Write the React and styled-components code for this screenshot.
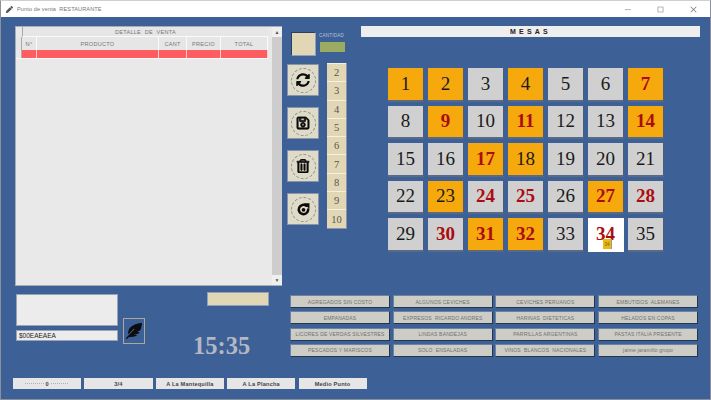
import React from "react";
import styled, { createGlobalStyle } from "styled-components";
import { FaSyncAlt, FaRegSave, FaRegTrashAlt, FaFeatherAlt, FaPen } from "react-icons/fa";
import { VscChromeMinimize, VscChromeMaximize, VscChromeClose } from "react-icons/vsc";

const Global = createGlobalStyle`
  html, body { margin: 0; padding: 0; width: 711px; height: 400px; overflow: hidden; }
  * { box-sizing: border-box; }
`;

const Win = styled.div`
  width: 711px; height: 400px; display: flex; flex-direction: column;
  background: #3d6097; border: 1px solid #8a8f98; border-top-color: #cfcfcf;
  font-family: "Liberation Sans", Arial, sans-serif; overflow: hidden;
`;
const TitleBar = styled.div`
  height: 16px; flex: none; background: #fff; display: flex; align-items: center; padding-left: 5px;
  color: #777; font-size: 5.6px; letter-spacing: 0.1px;
`;
const TitleIcon = styled.span`display: flex; color: #555; font-size: 7px; margin-right: 4px;`;
const TitleText = styled.span`flex: 1; white-space: pre;`;
const WinBtn = styled.span`width: 33px; display: flex; justify-content: center; color: #777; font-size: 9px;`;

const Top = styled.div`height: 260px; flex: none; margin-top: 9px; display: flex;`;
const TablePanel = styled.div`
  width: 267px; margin-left: 14px; background: #e9e9e9; display: flex; border: 1px solid #a9adb5; border-right: none;
`;
const TableArea = styled.div`flex: 1; display: flex; flex-direction: column; border-right: 3px solid #e9e9e9;`;
const Scrollbar = styled.div`width: 11px; background: #cdcdcd; display: flex; flex-direction: column; margin-left: 1px;`;
const ScrollBtn = styled.div`height: 10px; background: #efefef; color: #555; font-size: 5px; display: flex; align-items: center; justify-content: center;`;
const ScrollTrack = styled.div`flex: 1;`;
const HeadTop = styled.div`
  height: 10px; margin-left: 6px; background: #e6e6e6; border-bottom: 1px solid #fafafa; border-left: 1px solid #aaa;
  color: #777; font-size: 5.5px; letter-spacing: 0.3px; display: flex; align-items: center; justify-content: center; white-space: pre;
`;
const Row = styled.div`height: ${p => p.$h}px; display: flex; flex: none;`;
const Gutter = styled.div`width: 6px; background: ${p => p.$bg || "#e6e6e6"}; border-right: 1px solid #aaa;`;
const HeadCell = styled.div`
  width: ${p => p.$w}px; background: #e6e6e6; border-right: 1px solid #fafafa; color: #777;
  font-size: 5.6px; letter-spacing: 0.25px; display: flex; align-items: center; justify-content: center;
`;
const RedCell = styled.div`width: ${p => p.$w}px; background: #fd5c60; border-right: 1px solid #fbd0d0;`;
const RedRow = styled(Row)`border-bottom: 1px solid #fafafa;`;

const Mid = styled.div`width: 60px; margin-left: 5px; position: relative; display: flex; padding-top: 6px;`;
const ToolCol = styled.div`width: 34px; display: flex; flex-direction: column; gap: 11px; align-items: flex-start;`;
const Swatch = styled.div`
  width: 25px; height: 24px; margin-left: 4px; margin-bottom: -3px; background: #e2d7b4;
  border: 1px solid #2e3f5e; border-right-color: #8da0bd; border-bottom-color: #8da0bd;
`;
const ToolBtn = styled.div`
  width: 32px; height: 32px; background: #dedbc8; border: 1px solid #8a93a8; display: flex; align-items: center; justify-content: center;
`;
const Ring = styled.div`
  width: 25px; height: 25px; border-radius: 50%; border: 1px dashed #8f8f8f; display: flex; align-items: center; justify-content: center;
  color: #0c0c0c; font-size: 14px;
  svg { stroke: currentColor; stroke-width: ${p => p.$bold || 0}; }
`;
const RightStack = styled.div`width: 30px; display: flex; flex-direction: column; align-items: flex-start;`;
const Qty = styled.div`color: #b8c4d8; font-size: 4.6px; letter-spacing: 0.2px; height: 7px; width: 30px; line-height: 7px; white-space: nowrap;`;
const GreenBox = styled.div`width: 25px; height: 10px; background: #9bab62; margin: 3px 0 11px 1px;`;
const NumList = styled.div`width: 20px; margin-left: 8px; display: flex; flex-direction: column; border-bottom: 1px solid #8a93a8; border-right: 1px solid #8a93a8;`;
const NumItem = styled.div`
  height: 18.3px; background: #e2d7b4; border-top: 1px solid #f4f0e2; color: #555; font: 10.5px "Liberation Serif", serif;
  display: flex; align-items: center; justify-content: center;
`;

const Right = styled.div`flex: 1; margin-left: 14px; display: flex; flex-direction: column;`;
const MesasBar = styled.div`
  width: 339px; height: 11px; background: #eeeeee; color: #222; font-size: 7px; font-weight: 700; letter-spacing: 3.2px;
  display: flex; align-items: center; justify-content: center; flex: none;
`;
const TileGrid = styled.div`
  margin: 31px 0 0 27px; width: 276px; display: grid; grid-template-columns: repeat(7, 36px); grid-auto-rows: 33.5px; gap: 4px;
`;
const TILE = { o: "#f5a90c", g: "#d0d0d0", w: "#ffffff" };
const Tile = styled.div`
  position: relative; background: ${p => TILE[p.$k]}; color: ${p => (p.$red ? "#ab0c10" : "#1a1a1a")};
  font: ${p => (p.$red ? 700 : 400)} 19px "Liberation Serif", serif;
  display: flex; align-items: center; justify-content: center;
  border-right: 1px solid ${p => (p.$k === "w" ? "#fff" : "#4d5c78")};
  border-bottom: 2px solid ${p => (p.$k === "w" ? "#fff" : "#5b6a84")};
`;
const DragTag = styled.div`
  position: absolute; left: 15px; top: 21px; width: 9px; height: 10px; background: #eeb90f; color: #6d5a20;
  border-right: 1px solid #999; font: 4.5px "Liberation Sans", sans-serif; display: flex; align-items: center; justify-content: center;
`;

const Bottom = styled.div`height: 75px; flex: none; display: flex; margin-top: 6px;`;
const LeftBottom = styled.div`width: 289px; display: grid; grid-template-columns: 107px 84px 1fr; padding-left: 15px;`;
const InputStack = styled.div`display: flex; flex-direction: column; padding-top: 2px;`;
const WhiteBox = styled.div`width: 102px; height: 32px; background: #ececec; border: 1px solid #9aa3b5;`;
const ColorField = styled.div`
  width: 102px; height: 11px; margin-top: 4px; background: #ececec; border: 1px solid #9aa3b5; color: #222; font-size: 6.5px;
  display: flex; align-items: center; padding-left: 2px;
`;
const FeatherCol = styled.div`padding-top: 26px;`;
const FeatherBtn = styled.div`
  width: 22px; height: 26px; border: 1px solid #a8a89c; color: #0d0d0d; font-size: 16px;
  display: flex; align-items: center; justify-content: center;
`;
const ClockCol = styled.div`display: flex; flex-direction: column;`;
const TanBar = styled.div`width: 62px; height: 14px; background: #e2d7b4; border: 1px solid #8da0bd;`;
const Clock = styled.div`
  margin: 26px 0 0 -14px; color: #b4b8c2; font: 700 24.5px "Liberation Serif", serif; line-height: 27px;
`;
const Categories = styled.div`
  width: 409px; display: grid; grid-template-columns: repeat(4, 100px); grid-auto-rows: 13px; column-gap: 2.7px; row-gap: 3.3px; padding-top: 3px;
`;
const CatBtn = styled.div`
  background: #cdcdc6; color: #70726e; font-size: 5px; letter-spacing: 0.18px; white-space: pre;
  border: 1px solid #24364f; border-left-color: #6d82a2; border-top-color: #6d82a2;
  display: flex; align-items: center; justify-content: center; overflow: hidden;
`;
const Footer = styled.div`display: flex; gap: 3.2px; padding: 11px 0 0 12px;`;
const FootBtn = styled.div`
  position: relative; width: 68.2px; height: 11px; background: #e6e6e6; color: #444; font-size: 5.6px; letter-spacing: 0.2px; font-weight: 700;
  display: flex; align-items: center; justify-content: center;
`;
const SliderBtn = styled(FootBtn)`
  &::before {
    content: ""; position: absolute; left: 12px; right: 13px; top: 5px; border-top: 1px dotted #b0b0b0;
  }
`;
const SliderValue = styled.span`position: relative; background: #e6e6e6; padding: 0 1px;`;

const RedoGlyph = () => (
  <svg width="15" height="15" viewBox="0 0 24 24" fill="none">
    <path d="M19.5 12a7.5 7.5 0 1 1-3-6" stroke="#0c0c0c" strokeWidth="4" strokeLinecap="round" />
    <path d="M12.5 2h9v9z" fill="#0c0c0c" stroke="none" />
    <circle cx="12" cy="12.5" r="3" fill="#0c0c0c" stroke="none" />
  </svg>
);

const tiles = [
  "o","o","g","o","g","g","or",
  "g","or","g","or","g","g","or",
  "g","g","or","o","g","g","g",
  "g","o","gr","gr","g","or","gr",
  "g","gr","or","or","g","wr","g",
];
const cats = [
  "AGREGADOS SIN COSTO","ALGUNOS CEVICHES","CEVICHES PERUANOS","EMBUTIDOS  ALEMANES",
  "EMPANADAS","EXPRESOS  RICARDO ANDRES","HARINAS  DIETETICAS","HELADOS EN COPAS",
  "LICORES DE VERDAS SILVESTRES","LINDAS BANDEJAS","PARRILLAS ARGENTINAS","PASTAS ITALIA PRESENTE",
  "PESCADOS Y MARISCOS","SOLO  ENSALADAS","VINOS  BLANCOS  NACIONALES","jaime jaramillo grupo",
];
const cols = [["N°",15],["PRODUCTO",122],["CANT",28],["PRECIO",34],["TOTAL",47]];

export default function App() {
  return (
    <Win>
      <Global />
      <TitleBar>
        <TitleIcon><FaPen /></TitleIcon>
        <TitleText>Punto de venta  RESTAURANTE</TitleText>
        <WinBtn><VscChromeMinimize /></WinBtn>
        <WinBtn><VscChromeMaximize /></WinBtn>
        <WinBtn><VscChromeClose /></WinBtn>
      </TitleBar>
      <Top>
        <TablePanel>
          <TableArea>
            <HeadTop>DETALLE  DE  VENTA</HeadTop>
            <Row $h={13}>
              <Gutter />
              {cols.map(([t, w]) => <HeadCell key={t} $w={w}>{t}</HeadCell>)}
            </Row>
            <RedRow $h={9}>
              <Gutter $bg="#e9e9e9" />
              {cols.map(([t, w]) => <RedCell key={t} $w={w} />)}
            </RedRow>
          </TableArea>
          <Scrollbar>
            <ScrollBtn>▲</ScrollBtn>
            <ScrollTrack />
            <ScrollBtn>▼</ScrollBtn>
          </Scrollbar>
        </TablePanel>
        <Mid>
          <ToolCol>
            <Swatch />
            <ToolBtn><Ring><FaSyncAlt /></Ring></ToolBtn>
            <ToolBtn><Ring $bold={25}><FaRegSave /></Ring></ToolBtn>
            <ToolBtn><Ring $bold={25}><FaRegTrashAlt /></Ring></ToolBtn>
            <ToolBtn><Ring><RedoGlyph /></Ring></ToolBtn>
          </ToolCol>
          <RightStack>
            <Qty>CANTIDAD</Qty>
            <GreenBox />
            <NumList>
              {[2,3,4,5,6,7,8,9,10].map(n => <NumItem key={n}>{n}</NumItem>)}
            </NumList>
          </RightStack>
        </Mid>
        <Right>
          <MesasBar>MESAS</MesasBar>
          <TileGrid>
            {tiles.map((t, i) => (
              <Tile key={i} $k={t[0]} $red={t[1] === "r"}>
                {i + 1}
                {i === 33 && <DragTag>34</DragTag>}
              </Tile>
            ))}
          </TileGrid>
        </Right>
      </Top>
      <Bottom>
        <LeftBottom>
          <InputStack>
            <WhiteBox />
            <ColorField>$00EAEAEA</ColorField>
          </InputStack>
          <FeatherCol>
            <FeatherBtn><FaFeatherAlt /></FeatherBtn>
          </FeatherCol>
          <ClockCol>
            <TanBar />
            <Clock>15:35</Clock>
          </ClockCol>
        </LeftBottom>
        <Categories>
          {cats.map(c => <CatBtn key={c}>{c}</CatBtn>)}
        </Categories>
      </Bottom>
      <Footer>
        <SliderBtn><SliderValue>0</SliderValue></SliderBtn>
        <FootBtn>3/4</FootBtn>
        <FootBtn>A La Mantequilla</FootBtn>
        <FootBtn>A La Plancha</FootBtn>
        <FootBtn>Medio Punto</FootBtn>
      </Footer>
    </Win>
  );
}
